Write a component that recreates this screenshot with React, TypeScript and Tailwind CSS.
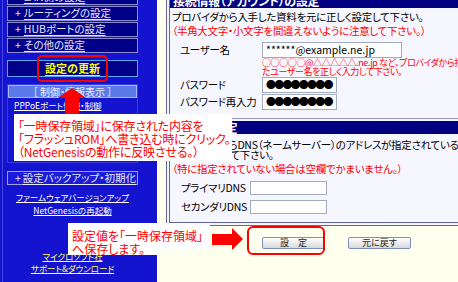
type BoxProps = { label: string };

function NavBox({ label }: BoxProps) {
  return (
    <div className="flex h-[15px] items-center whitespace-nowrap border border-[#8c8cd4] bg-[#000088] pl-[7px] text-[10.5px] leading-none text-[#e6e6f6]">
      <span className="mr-[3px]">+</span>
      <span className="underline underline-offset-2">{label}</span>
    </div>
  );
}

function Sidebar() {
  return (
    <aside className="w-[157px] shrink-0 bg-[#1313d0] pl-[2px]">
      <div className="flex h-full flex-col border-l border-[#4646e2] pl-[4px] pr-[19px]">
        <div className="-mt-[10px] flex flex-col gap-[1px]">
          <NavBox label="LAN側の設定" />
          <NavBox label="ルーティングの設定" />
          <NavBox label="HUBポートの設定" />
          <NavBox label="その他の設定" />
        </div>
        <div className="mt-[7px] flex h-[17px] items-center justify-center border border-[#58a8f0] bg-[#000088] text-[11px] font-bold leading-none text-[#ffff00] underline underline-offset-2">
          設定の更新
        </div>
        <div className="mt-[7px] flex h-[79px] flex-col border border-[#3a3ade]">
          <div className="flex h-[13px] items-center justify-center border border-[#a6b6fa] bg-[#5a7aea] text-[10px] leading-none text-[#eef0ff]">
            ［ 制御・情報表示 ］
          </div>
          <div className="flex flex-col gap-[7px] whitespace-nowrap pl-[6px] pt-[3px] text-[8.5px] leading-none text-white">
            <span className="underline">PPPoEポート情報・制御</span>
            <span className="underline">ステータス表示</span>
            <span className="underline">ログ表示</span>
          </div>
        </div>
        <div className="mt-[8px] flex h-[14px] items-center whitespace-nowrap border border-[#9c9ce0] bg-[#1c1cd6] pl-[7px] text-[10.5px] leading-none text-[#e6e6f6]">
          <span className="mr-[2px]">+</span>
          <span className="underline underline-offset-2">設定バックアップ・初期化</span>
        </div>
        <div className="mt-[8px] flex flex-col items-center gap-[4px] whitespace-nowrap text-[8.5px] leading-[9px] text-white">
          <span className="underline">ファームウェアバージョンアップ</span>
          <span className="underline">NetGenesisの再起動</span>
        </div>
        <div className="mt-[37px] flex flex-col items-center gap-[3px] whitespace-nowrap text-[8.5px] leading-[9px] text-[#ffff66]">
          <span className="underline">マイクロソフト社</span>
          <span className="underline">サポート&ダウンロード</span>
        </div>
      </div>
    </aside>
  );
}

function Input({ w, h, children }: { w: string; h: string; children?: React.ReactNode }) {
  return (
    <div className={`${w} ${h} flex shrink-0 items-center border border-[#a2abc2] bg-white pl-[3px] text-[10.5px] leading-none tracking-normal text-black`}>
      {children}
    </div>
  );
}

function Dots() {
  return <span className="whitespace-nowrap text-[10px] tracking-[-1.8px]">●●●●●●●●</span>;
}

function Label({ w, children }: { w: string; children: React.ReactNode }) {
  return <span className={`${w} shrink-0 whitespace-nowrap`}>{children}</span>;
}

function Main() {
  return (
    <main className="flex min-w-0 flex-1 flex-col pl-[9px]">
      <section className="-mt-[10px] w-[330px] shrink-0 border-[4px] border-r-0 border-double border-[#6464a4] bg-[#f6f6ff] pb-[7px] text-[10.5px] tracking-[-0.3px] text-black">
        <div className="h-[14px] whitespace-nowrap bg-[#000080] pl-[3px] text-[12px] font-bold leading-[14px] text-white">
          接続情報（アカウント）の設定
        </div>
        <div className="mt-[2px] whitespace-nowrap pl-[2px] leading-[14px]">
          <p>プロバイダから入手した資料を元に正しく設定して下さい。</p>
          <p className="text-[#ff0000]">（半角大文字・小文字を間違えないように注意して下さい。）</p>
        </div>

        <div className="mt-[4px] flex items-center">
          <Label w="w-[92px] pl-[10px]">ユーザー名</Label>
          <Input w="w-[140px]" h="h-[16px]">******@example.ne.jp</Input>
        </div>
        <div className="ml-[92px] whitespace-nowrap text-[9px] leading-[9px] tracking-[-0.4px] text-[#ff0000]">
          <p>○○○○○@△△△△△.ne.jp など、プロバイダから指定され</p>
          <p>たユーザー名を正しく入力して下さい。</p>
        </div>
        <div className="mt-[1px] flex items-center">
          <Label w="w-[92px] pl-[10px]">パスワード</Label>
          <Input w="w-[75px]" h="h-[16px]">
            <Dots />
          </Input>
        </div>
        <div className="mt-[1px] flex items-center">
          <Label w="w-[92px] pl-[10px]">パスワード再入力</Label>
          <Input w="w-[75px]" h="h-[16px]">
            <Dots />
          </Input>
        </div>

        <div className="mt-[8px] h-px bg-[#9a9ace]" />
        <div className="mt-[2px] h-[13px] whitespace-nowrap bg-[#000080] pl-[3px] text-[12px] font-bold leading-[13px] text-white">
          ＤＮＳの設定
        </div>
        <div className="mt-[6px] whitespace-nowrap pl-[2px] leading-[10px]">
          <p>プロバイダからDNS（ネームサーバー）のアドレスが指定されている場合は、</p>
          <p>設定を入力して下さい。</p>
        </div>
        <p className="mt-[2px] whitespace-nowrap pl-[2px] leading-[13px] text-[#ff0000]">
          （特に指定されていない場合は空欄でかまいません。）
        </p>
        <div className="mt-[5px] flex items-center">
          <Label w="w-[80px] pl-[11px]">プライマリDNS</Label>
          <Input w="w-[77px]" h="h-[14px]" />
        </div>
        <div className="mt-[3px] flex items-center">
          <Label w="w-[80px] pl-[11px]">セカンダリDNS</Label>
          <Input w="w-[77px]" h="h-[14px]" />
        </div>
      </section>

      <div className="mt-[11px] flex gap-[23px] pl-[96px]">
        <button className="flex h-[12px] w-[63px] shrink-0 items-center justify-center rounded-[2px] border border-[#7b8fb8] bg-linear-to-b from-white to-[#d8d8d8] text-[9px] leading-none text-[#222]">
          設　定
        </button>
        <button className="flex h-[12px] w-[63px] shrink-0 items-center justify-center rounded-[2px] border border-[#7b8fb8] bg-linear-to-b from-white to-[#d8d8d8] text-[9px] leading-none text-[#222]">
          元に戻す
        </button>
      </div>
    </main>
  );
}

export default function App() {
  return (
    <div className="relative flex h-[282px] w-[458px] overflow-hidden bg-[#ffffee] font-['Noto_Sans_CJK_JP',sans-serif] [font-feature-settings:'palt']">
      <Sidebar />
      <Main />

      {/* red marks and notes laid over the page */}
      <div className="absolute left-[37px] top-[55px] h-[27px] w-[71px] rounded-[5px] border-2 border-[#ff0000]" />
      <svg className="absolute left-[58px] top-[87px]" width="30" height="28" viewBox="0 0 30 28">
        <polygon points="14,1 28,11 21,11 21,28 7,28 7,11 0,11" fill="#ff0000" />
      </svg>
      <div className="absolute left-[14px] top-[114px] h-[47px] w-[218px] bg-white pl-[4px] pt-[5px] text-[12px] leading-[13px] tracking-[-0.2px] text-[#ff0000]">
        <p className="whitespace-nowrap">「一時保存領域」に保存された内容を</p>
        <p className="whitespace-nowrap">「フラッシュROM」へ書き込む時にクリック。</p>
        <p className="whitespace-nowrap">（NetGenesisの動作に反映させる。）</p>
      </div>

      <div className="absolute left-[68px] top-[223px] h-[26px] w-[142px] bg-white" />
      <div className="absolute left-[68px] top-[249px] h-[6px] w-[90px] bg-white" />
      <div className="absolute left-[72px] top-[229px] text-[12px] leading-[13px] text-[#ff0000]">
        <p className="whitespace-nowrap">設定値を「一時保存領域」</p>
        <p className="whitespace-nowrap">へ保存します。</p>
      </div>

      <svg className="absolute left-[211px] top-[227px]" width="33" height="24" viewBox="0 0 33 24">
        <polygon points="1,7 21,7 21,1 32,12 21,23 21,18 1,18" fill="#ff0000" />
      </svg>
      <div className="absolute left-[247px] top-[226px] h-[29px] w-[78px] rounded-[6px] border-2 border-[#ff0000]" />
    </div>
  );
}
